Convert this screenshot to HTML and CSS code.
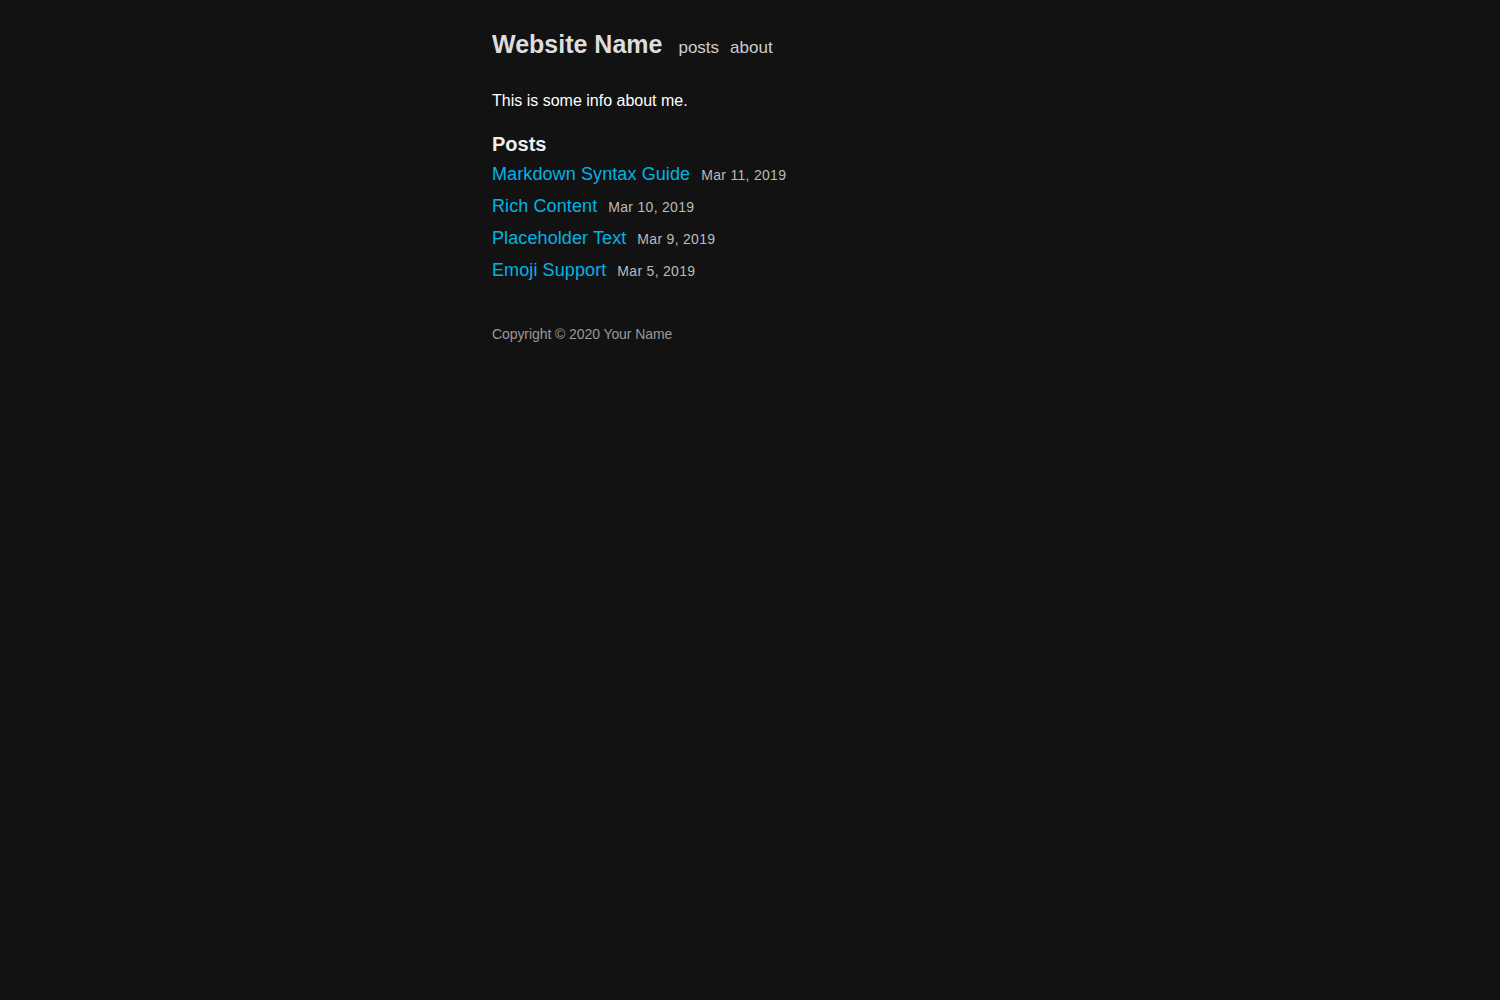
FILE: index.html
```html
<!DOCTYPE html>
<html>
<head>
<meta charset="utf-8">
<link rel="stylesheet" href="styles.css">
</head>
<body>
<div class="wrap">
  <header class="header">
    <a class="site-title" href="#">Website Name</a>
    <nav class="nav">
      <a href="#">posts</a>
      <a href="#">about</a>
    </nav>
  </header>
  <main>
    <p class="intro">This is some info about me.</p>
    <h2 class="section-title">Posts</h2>
    <ul class="posts">
      <li><a href="#">Markdown Syntax Guide</a><span class="date">Mar 11, 2019</span></li>
      <li><a href="#">Rich Content</a><span class="date">Mar 10, 2019</span></li>
      <li><a href="#">Placeholder Text</a><span class="date">Mar 9, 2019</span></li>
      <li><a href="#">Emoji Support</a><span class="date">Mar 5, 2019</span></li>
    </ul>
  </main>
  <footer class="footer">Copyright © 2020 Your Name</footer>
</div>
</body>
</html>
```

FILE: styles.css
```css
html, body {
  margin: 0;
  padding: 0;
  background: #121212;
}
body {
  font-family: "Liberation Sans", Arial, sans-serif;
  color: #f0f0f0;
}
a { text-decoration: none; }
.wrap {
  width: 516px;
  margin: 0 auto;
  padding-top: 30px;
}
.header {
  display: flex;
  align-items: baseline;
  gap: 16px;
}
.site-title {
  font-size: 25px;
  font-weight: bold;
  color: #dddddd;
}
.nav {
  display: flex;
  gap: 11px;
  font-size: 17px;
}
.nav a { color: #cccccc; }
.intro {
  margin: 32px 0 0;
  font-size: 16px;
  line-height: 20px;
  color: #ffffff;
}
.section-title {
  margin: 21px 0 0;
  font-size: 20px;
  line-height: 24px;
  color: #eeeeee;
}
.posts {
  list-style: none;
  margin: 5px 0 0;
  padding: 0;
}
.posts li {
  display: flex;
  align-items: baseline;
  gap: 11px;
  height: 32px;
  line-height: 26px;
}
.posts a {
  font-size: 18px;
  color: #00b4e6;
  letter-spacing: 0.1px;
}
.date {
  font-size: 14px;
  color: #bbbbbb;
  letter-spacing: 0.3px;
}
.footer {
  margin-top: 37px;
  font-size: 14px;
  color: #999999;
  letter-spacing: -0.08px;
}
```
